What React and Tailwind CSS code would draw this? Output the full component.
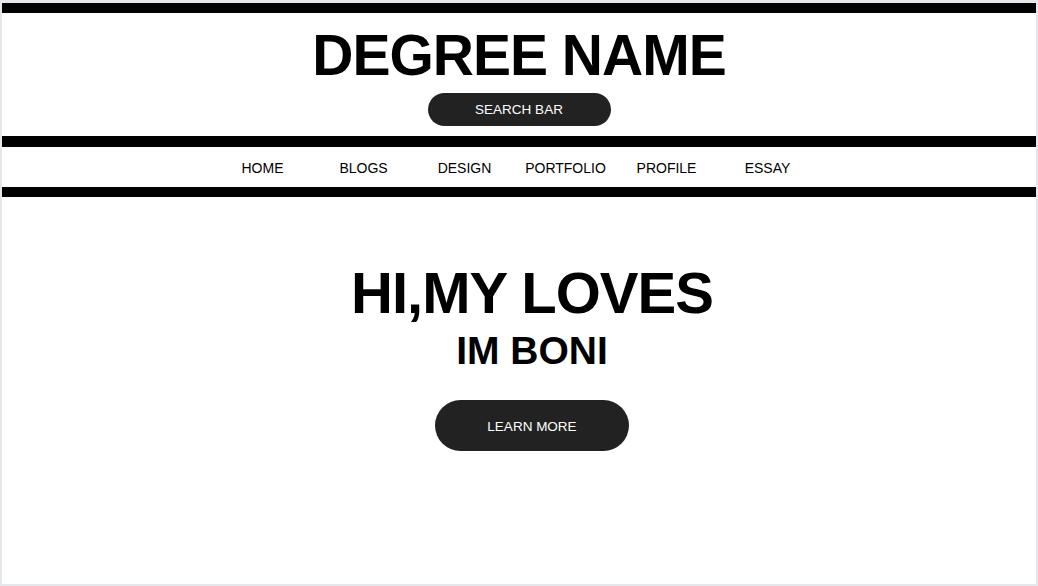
import React from "react";

const navItems = ["HOME", "BLOGS", "DESIGN", "PORTFOLIO", "PROFILE", "ESSAY"];

const App = () => {
  return (
    <div
      className="h-screen w-full bg-white border-t-[3px] border-x-2 border-b-2 border-[#e6e7ec] flex flex-col text-black"
      style={{ fontFamily: '"Liberation Sans", Arial, sans-serif' }}
    >
      <div className="h-[10px] bg-black" />

      <header className="h-[123px] flex flex-col items-center pt-[14px]">
        <h1 className="text-[57px] font-bold leading-[57px] tracking-[-1px]">DEGREE NAME</h1>
        <button className="mt-[9px] w-[183px] h-[33px] rounded-full bg-[#222222] text-white text-[13.5px] pt-[2px]">
          SEARCH BAR
        </button>
      </header>

      <div className="h-[11px] bg-black" />

      <nav className="h-[40px] flex items-center justify-center pr-[8px] pt-[2px]">
        {navItems.map((item) => (
          <a key={item} href="#" className="w-[101px] text-center text-[14px]">
            {item}
          </a>
        ))}
      </nav>

      <div className="h-[10px] bg-black" />

      <main className="flex flex-col items-center pt-[64px] pl-[26px]">
        <h2 className="text-[58px] font-bold leading-[64px] tracking-[-1px]">HI,MY LOVES</h2>
        <h3 className="mt-[3px] text-[39px] font-bold leading-[46px]">IM BONI</h3>
        <button className="mt-[26px] w-[194px] h-[51px] rounded-full bg-[#222222] text-white text-[13.5px] pt-[3px]">
          LEARN MORE
        </button>
      </main>
    </div>
  );
};

export default App;
